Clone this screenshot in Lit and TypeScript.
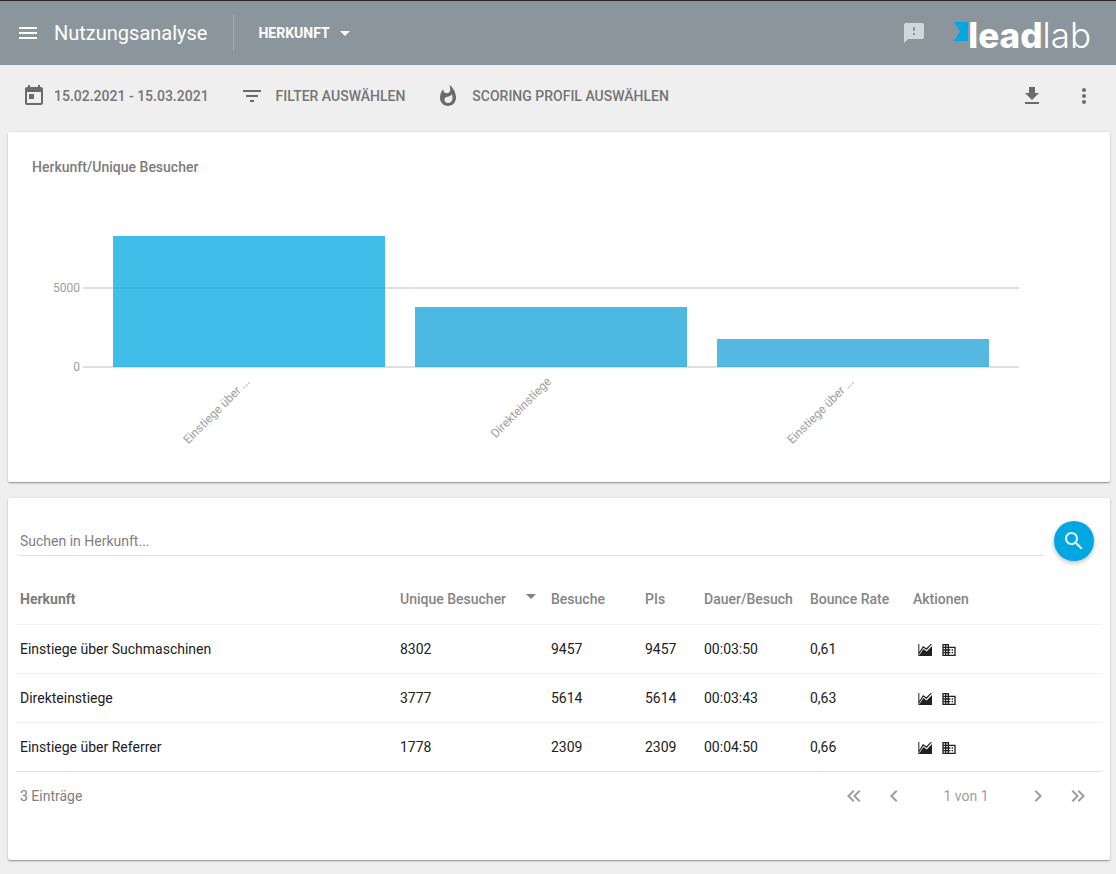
import { LitElement, html, css, svg } from "lit";
import { customElement, property, state } from "lit/decorators.js";

const ICONS: Record<string, string> = {
  menu: "M3 18h18v-2H3v2zm0-5h18v-2H3v2zm0-7v2h18V6H3z",
  dropDown: "M7 10l5 5 5-5z",
  feedback:
    "M20 2H4c-1.1 0-1.99.9-1.99 2L2 22l4-4h14c1.1 0 2-.9 2-2V4c0-1.1-.9-2-2-2zm-7 12h-2v-2h2v2zm0-4h-2V6h2v4z",
  today:
    "M19 3h-1V1h-2v2H8V1H6v2H5c-1.11 0-1.99.9-1.99 2L3 19c0 1.1.89 2 2 2h14c1.1 0 2-.9 2-2V5c0-1.1-.9-2-2-2zm0 16H5V8h14v11zM7 10h5v5H7z",
  filter: "M10 18h4v-2h-4v2zM3 6v2h18V6H3zm3 7h12v-2H6v2z",
  fire:
    "M13.5.67s.74 2.65.74 4.8c0 2.06-1.35 3.73-3.41 3.73-2.07 0-3.63-1.67-3.63-3.73l.03-.36C5.21 7.51 4 10.62 4 14c0 4.42 3.58 8 8 8s8-3.58 8-8C20 8.61 17.41 3.8 13.5.67zM11.71 19c-1.78 0-3.22-1.4-3.22-3.14 0-1.62 1.05-2.76 2.81-3.12 1.77-.36 3.6-1.21 4.62-2.58.39 1.29.59 2.65.59 4.04 0 2.65-2.15 4.8-4.8 4.8z",
  download: "M19 9h-4V3H9v6H5l7 7 7-7zM5 18v2h14v-2H5z",
  more:
    "M12 8c1.1 0 2-.9 2-2s-.9-2-2-2-2 .9-2 2 .9 2 2 2zm0 2c-1.1 0-2 .9-2 2s.9 2 2 2 2-.9 2-2-.9-2-2-2zm0 6c-1.1 0-2 .9-2 2s.9 2 2 2 2-.9 2-2-.9-2-2-2z",
  search:
    "M15.5 14h-.79l-.28-.27C15.41 12.59 16 11.11 16 9.5 16 5.91 13.09 3 9.5 3S3 5.91 3 9.5 5.91 16 9.5 16c1.61 0 3.09-.59 4.23-1.57l.27.28v.79l5 4.99L20.49 19l-4.99-5zm-6 0C7.01 14 5 11.99 5 9.5S7.01 5 9.5 5 14 7.01 14 9.5 11.99 14 9.5 14z",
  first:
    "M18.41 7.41L17 6l-6 6 6 6 1.41-1.41L13.83 12zM12.41 7.41L11 6l-6 6 6 6 1.41-1.41L7.83 12z",
  prev: "M15.41 7.41L14 6l-6 6 6 6 1.41-1.41L10.83 12z",
  next: "M10 6L8.59 7.41 13.17 12l-4.58 4.59L10 18l6-6z",
  last:
    "M5.59 7.41L7 6l6 6-6 6-1.41-1.41L10.17 12zM11.59 7.41L13 6l6 6-6 6-1.41-1.41L16.17 12z",
  trend:
    "M2 3h1.5v18H2zM3.5 15L9 6l5 3.5L20.5 3h2L14.4 12 9.5 8.6l-6 9.4zM3.5 21v-1.2L9.6 10.6l5 3.8L22.5 6v15z",
  company:
    "M12 7V3H2v18h20V7H12zM6 19H4v-2h2v2zm0-4H4v-2h2v2zm0-4H4V9h2v2zm0-4H4V5h2v2zm4 12H8v-2h2v2zm0-4H8v-2h2v2zm0-4H8V9h2v2zm0-4H8V5h2v2zm10 12h-8v-2h2v-2h-2v-2h2v-2h-2V9h8v10zm-2-8h-2v2h2v-2zm0 4h-2v2h2v-2z",
};

@customElement("ui-icon")
class UiIcon extends LitElement {
  static styles = css`
    :host {
      display: block;
      flex: none;
      width: 24px;
      height: 24px;
    }
    .glyph {
      display: block;
      width: 100%;
      height: 100%;
      fill: currentColor;
    }
  `;
  @property() name = "menu";

  render() {
    return html`<svg class="glyph" viewBox="0 0 24 24" aria-hidden="true">
      ${svg`<path d=${ICONS[this.name]}></path>`}
    </svg>`;
  }
}

const button = css`
  button {
    display: flex;
    align-items: center;
    justify-content: center;
    margin: 0;
    padding: 0;
    border: 0;
    background: none;
    color: inherit;
    font: inherit;
    cursor: pointer;
  }
`;

interface Row {
  name: string;
  short: string;
  color: string;
  visitors: number;
  visits: number;
  pis: number;
  duration: string;
  bounce: string;
}

const ROWS: Row[] = [
  { name: "Einstiege über Suchmaschinen", short: "Einstiege über ...", color: "#00a7e1", visitors: 8302, visits: 9457, pis: 9457, duration: "00:03:50", bounce: "0,61" },
  { name: "Direkteinstiege", short: "Direkteinstiege", color: "#12a1d9", visitors: 3777, visits: 5614, pis: 5614, duration: "00:03:43", bounce: "0,63" },
  { name: "Einstiege über Referrer", short: "Einstiege über ...", color: "#1ca0d6", visitors: 1778, visits: 2309, pis: 2309, duration: "00:04:50", bounce: "0,66" },
];

@customElement("app-header")
class AppHeader extends LitElement {
  static styles = [
    button,
    css`
      .bar {
        display: flex;
        align-items: center;
        height: 64px;
        padding: 0 25px 0 16px;
        border-top: 1px solid #2b262b;
        background: #8b969c;
        color: #fff;
      }
      .title {
        margin: 0 0 0 14px;
        font-size: 20px;
        font-weight: 400;
      }
      .divider {
        width: 1px;
        height: 36px;
        margin: 0 24px 0 26px;
        background: #a0a9ae;
      }
      .section {
        font-size: 14px;
        font-weight: 700;
      }
      .section ui-icon {
        margin-left: 3px;
      }
      .spacer {
        flex: 1;
      }
      .feedback {
        color: #cfd8dc;
      }
      .logo {
        display: flex;
        align-items: center;
        height: 40px;
        margin-left: 28px;
        padding-top: 4px;
        color: #fff;
        text-decoration: none;
      }
      .flag {
        width: 14px;
        height: 19px;
        margin-bottom: 8px;
      }
      .strong {
        font: 800 35px/40px Inter, "Liberation Sans", sans-serif;
      }
      .thin {
        font: 300 35px/40px Inter, "Liberation Sans", sans-serif;
      }
    `,
  ];

  render() {
    return html`<header class="bar">
      <button aria-label="Menü"><ui-icon name="menu"></ui-icon></button>
      <h1 class="title">Nutzungsanalyse</h1>
      <span class="divider"></span>
      <button class="section">HERKUNFT<ui-icon name="dropDown"></ui-icon></button>
      <span class="spacer"></span>
      <button class="feedback" aria-label="Feedback"><ui-icon name="feedback"></ui-icon></button>
      <a class="logo" href="#">
        <svg class="flag" viewBox="0 0 14 19" aria-hidden="true">
          <path fill="#00a7e1" d="M0 0h14v19H0l6-9.5z"></path>
        </svg>
        <span class="strong">lead</span><span class="thin">lab</span>
      </a>
    </header>`;
  }
}

@customElement("filter-bar")
class FilterBar extends LitElement {
  static styles = [
    button,
    css`
      .bar {
        box-sizing: border-box;
        display: flex;
        align-items: center;
        gap: 31px;
        height: 66px;
        padding: 0 20px 4px 22px;
        color: #757575;
        font-size: 14px;
        font-weight: 500;
      }
      .bar ui-icon {
        color: #6b6b6b;
      }
      .item {
        gap: 8px;
      }
      .wide {
        gap: 12px;
      }
      .tools {
        display: flex;
        gap: 28px;
        margin-left: auto;
      }
    `,
  ];

  render() {
    return html`<nav class="bar">
      <button class="item"><ui-icon name="today"></ui-icon>15.02.2021 - 15.03.2021</button>
      <button class="item wide"><ui-icon name="filter"></ui-icon>FILTER AUSWÄHLEN</button>
      <button class="item wide"><ui-icon name="fire"></ui-icon>SCORING PROFIL AUSWÄHLEN</button>
      <div class="tools">
        <button aria-label="Herunterladen"><ui-icon name="download"></ui-icon></button>
        <button aria-label="Mehr"><ui-icon name="more"></ui-icon></button>
      </div>
    </nav>`;
  }
}

@customElement("origin-chart")
class OriginChart extends LitElement {
  static styles = css`
    .title {
      margin: 0;
      color: #7c7c7c;
      font-size: 14px;
      font-weight: 500;
      line-height: 20px;
    }
    .plot {
      display: grid;
      grid-template-columns: 48px 1fr;
      grid-template-rows: 79px 79px;
      column-gap: 3px;
      margin: 32px 67px 0 0;
    }
    .tick {
      grid-column: 1;
      align-self: end;
      margin-bottom: -8px;
      color: #9e9e9e;
      font-size: 12px;
      line-height: 16px;
      text-align: right;
    }
    .line {
      grid-column: 2;
      align-self: end;
      border-bottom: 2px solid #e0e0e0;
      margin-bottom: -1px;
    }
    .upper {
      grid-row: 1;
    }
    .lower {
      grid-row: 2;
    }
    .bars {
      grid-area: 1 / 2 / 3 / 3;
      display: flex;
      align-items: flex-end;
      gap: 30px;
      padding: 0 30px;
    }
    .bar {
      flex: 1;
      opacity: 0.75;
    }
    .labels {
      display: flex;
      gap: 30px;
      height: 73px;
      margin: 0 97px 0 81px;
      padding-top: 4px;
      color: #9e9e9e;
      font-size: 12px;
      line-height: 14px;
    }
    .cell {
      flex: 1;
      display: grid;
      grid-template-columns: 1fr 1fr;
    }
    .label {
      justify-self: end;
      align-self: start;
      padding-right: 2px;
      transform: rotate(-45deg);
      transform-origin: right center;
      white-space: nowrap;
    }
  `;

  render() {
    return html`<h2 class="title">Herkunft/Unique Besucher</h2>
      <div class="plot">
        <span class="tick upper">5000</span><span class="line upper"></span>
        <span class="tick lower">0</span><span class="line lower"></span>
        <div class="bars">
          ${ROWS.map(
            (r) => html`<div class="bar" style="height:${r.visitors / 100}%;background:${r.color}"></div>`
          )}
        </div>
      </div>
      <div class="labels">
        ${ROWS.map((r) => html`<div class="cell"><span class="label">${r.short}</span></div>`)}
      </div>`;
  }
}

@customElement("origin-table")
class OriginTable extends LitElement {
  static styles = [
    button,
    css`
      :host {
        font-size: 14px;
      }
      .search {
        display: flex;
        align-items: center;
        gap: 10px;
        padding: 0 8px 0 2px;
      }
      .query {
        flex: 1;
        min-width: 0;
        box-sizing: border-box;
        height: 30px;
        padding: 0 2px;
        border: 0;
        border-bottom: 1px solid #e0e0e0;
        outline: 0;
        background: none;
        color: #212121;
        font: inherit;
      }
      .query::placeholder {
        color: #808080;
        opacity: 1;
      }
      .search .go {
        width: 40px;
        height: 40px;
        border-radius: 50%;
        background: #00a7e1;
        color: #e5f6fc;
        box-shadow: 0 2px 5px rgba(0, 0, 0, 0.26);
      }
      .table {
        width: 100%;
        margin-top: 14px;
        border-collapse: collapse;
        table-layout: fixed;
        color: #212121;
      }
      .c-visitors { width: 151px; }
      .c-visits { width: 94px; }
      .c-pis { width: 59px; }
      .c-duration { width: 106px; }
      .c-bounce { width: 103px; }
      .c-actions { width: 193px; }
      th,
      td {
        box-sizing: border-box;
        height: 49px;
        padding: 0 0 0 4px;
        border-bottom: 1px solid #f0f0f0;
        text-align: left;
        white-space: nowrap;
      }
      th {
        color: #858585;
        font-weight: 500;
      }
      th.key {
        color: #7c7c7c;
        font-weight: 700;
      }
      tbody tr:last-child td {
        border-bottom-color: #e0e0e0;
      }
      .sort {
        display: flex;
        align-items: center;
        justify-content: space-between;
        padding-right: 11px;
      }
      .arrow {
        width: 0;
        height: 0;
        margin-bottom: 5px;
        border: 5px solid transparent;
        border-top-color: #808080;
        border-bottom-width: 0;
      }
      .actions {
        display: flex;
        gap: 8px;
        padding: 2px 0 0 4px;
      }
      .actions ui-icon {
        width: 16px;
        height: 16px;
      }
      .foot {
        display: flex;
        align-items: center;
        justify-content: space-between;
        height: 48px;
        padding: 0 4px;
        color: #808080;
      }
      .pager {
        display: flex;
        align-items: center;
        color: #9e9e9e;
      }
      .pager button {
        width: 40px;
        height: 40px;
      }
      .page {
        width: 104px;
        text-align: center;
      }
    `,
  ];

  @state() private query = "";

  render() {
    const rows = ROWS.filter((r) => r.name.toLowerCase().includes(this.query.toLowerCase()));
    return html`
      <form class="search" @submit=${(e: Event) => e.preventDefault()}>
        <input
          class="query"
          type="text"
          aria-label="Suchen in Herkunft"
          placeholder="Suchen in Herkunft..."
          @input=${(e: Event) => (this.query = (e.target as HTMLInputElement).value)}
        />
        <button class="go" aria-label="Suchen"><ui-icon name="search"></ui-icon></button>
      </form>
      <table class="table">
        <colgroup>
          <col />
          <col class="c-visitors" />
          <col class="c-visits" />
          <col class="c-pis" />
          <col class="c-duration" />
          <col class="c-bounce" />
          <col class="c-actions" />
        </colgroup>
        <thead>
          <tr>
            <th class="key">Herkunft</th>
            <th><span class="sort">Unique Besucher<span class="arrow"></span></span></th>
            <th>Besuche</th>
            <th>PIs</th>
            <th>Dauer/Besuch</th>
            <th>Bounce Rate</th>
            <th>Aktionen</th>
          </tr>
        </thead>
        <tbody>
          ${rows.map(
            (r) => html`<tr>
              <td>${r.name}</td>
              <td>${r.visitors}</td>
              <td>${r.visits}</td>
              <td>${r.pis}</td>
              <td>${r.duration}</td>
              <td>${r.bounce}</td>
              <td>
                <span class="actions">
                  <button aria-label="Verlauf"><ui-icon name="trend"></ui-icon></button>
                  <button aria-label="Firmen"><ui-icon name="company"></ui-icon></button>
                </span>
              </td>
            </tr>`
          )}
        </tbody>
      </table>
      <div class="foot">
        <span>${rows.length} Einträge</span>
        <div class="pager">
          <button aria-label="Erste Seite"><ui-icon name="first"></ui-icon></button>
          <button aria-label="Vorherige Seite"><ui-icon name="prev"></ui-icon></button>
          <span class="page">1 von 1</span>
          <button aria-label="Nächste Seite"><ui-icon name="next"></ui-icon></button>
          <button aria-label="Letzte Seite"><ui-icon name="last"></ui-icon></button>
        </div>
      </div>
    `;
  }
}

@customElement("app-root")
class AppRoot extends LitElement {
  static styles = css`
    :host {
      display: block;
      box-sizing: border-box;
      min-height: 100vh;
      background: #efefef;
      font-family: Roboto, "Liberation Sans", sans-serif;
    }
    .content {
      display: flex;
      flex-direction: column;
      gap: 16px;
      padding: 1px 6px 14px 8px;
    }
    .card {
      border-radius: 2px;
      background: #fff;
      box-shadow:
        0 1px 3px rgba(0, 0, 0, 0.2),
        0 1px 1px rgba(0, 0, 0, 0.14),
        0 2px 1px -1px rgba(0, 0, 0, 0.12);
    }
    .chart {
      padding: 25px 24px 38px;
    }
    .list {
      padding: 23px 8px 40px;
    }
  `;

  render() {
    return html`
      <app-header></app-header>
      <filter-bar></filter-bar>
      <main class="content">
        <section class="card chart"><origin-chart></origin-chart></section>
        <section class="card list"><origin-table></origin-table></section>
      </main>
    `;
  }
}
